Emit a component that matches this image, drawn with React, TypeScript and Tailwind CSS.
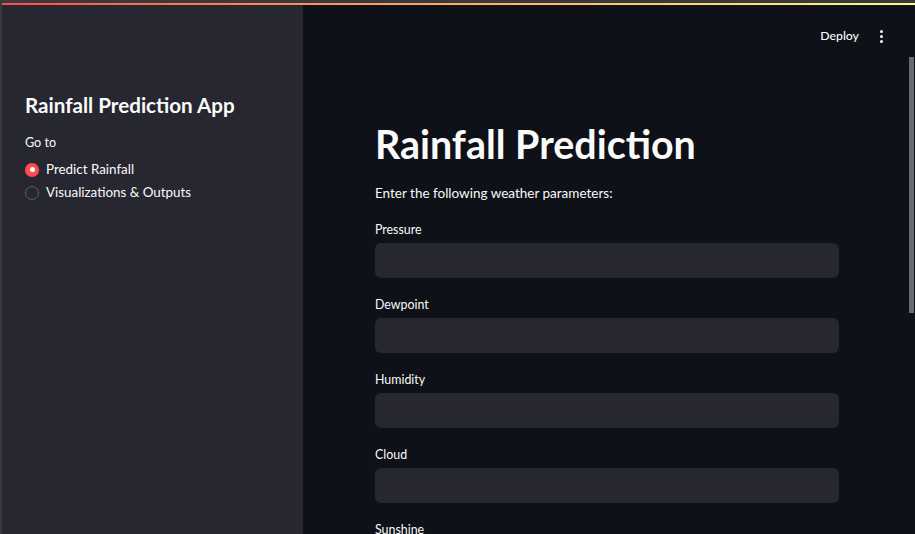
import React from "react";

const fields = ["Pressure", "Dewpoint", "Humidity", "Cloud", "Sunshine"];

function Radio({ label, checked }: { label: string; checked?: boolean }) {
  return (
    <div className="flex h-[23px] items-center gap-[7px]">
      {checked ? (
        <span className="grid h-[14px] w-[14px] place-items-center rounded-full bg-[#ff4b4b]">
          <span className="h-[5px] w-[5px] rounded-full bg-white" />
        </span>
      ) : (
        <span className="h-[14px] w-[14px] rounded-full border border-[#5c5e66]" />
      )}
      <span className="text-[13.4px] text-[#fafafa]">{label}</span>
    </div>
  );
}

export default function App() {
  return (
    <div
      className="flex h-[534px] w-full flex-col overflow-hidden bg-[#3a3a3c] pl-[2px] pt-[3px] text-[#fafafa]"
      style={{ fontFamily: "Lato, 'Noto Sans', sans-serif" }}
    >
      <div className="h-[2px] bg-gradient-to-r from-[#ff4b4b] to-[#fffd80]" />
      <div className="flex min-h-0 flex-1">
        {/* Sidebar */}
        <aside className="w-[301px] shrink-0 bg-[#262730] pl-[23px] pt-[84px]">
          <h2 className="text-[20.6px] font-bold leading-[32px]">Rainfall Prediction App</h2>
          <div className="mt-[14px] text-[12.6px] leading-[16px]">Go to</div>
          <div className="mt-[7px] flex flex-col">
            <Radio label="Predict Rainfall" checked />
            <Radio label="Visualizations & Outputs" />
          </div>
        </aside>

        {/* Main */}
        <main className="relative min-w-0 flex-1 bg-[#0e1117]">
          <header className="flex h-[62px] items-center justify-end gap-[21px] pr-[32px]">
            <button className="text-[12.3px] font-medium text-[#fafafa]">Deploy</button>
            <span className="flex flex-col items-center gap-[2px]">
              <span className="h-[3px] w-[3px] rounded-full bg-[#fafafa]" />
              <span className="h-[3px] w-[3px] rounded-full bg-[#fafafa]" />
              <span className="h-[3px] w-[3px] rounded-full bg-[#fafafa]" />
            </span>
          </header>
          <div className="absolute right-[1px] top-[52px] h-[256px] w-[5px] bg-[#6b6b6b]" />

          <div className="w-[536px] pl-[72px] pt-[53px]">
            <h1 className="text-[39.4px] font-bold leading-[48px]">Rainfall Prediction</h1>
            <p className="mt-[15px] text-[13.5px] leading-[20px]">Enter the following weather parameters:</p>
            <div className="mt-[18px] flex flex-col gap-[18px]">
              {fields.map((f) => (
                <div key={f} className="flex flex-col gap-[4px]">
                  <label className="text-[12.4px] leading-[18px]">{f}</label>
                  <input className="h-[35px] rounded-[6px] bg-[#262730] px-3 text-[14px] outline-none" />
                </div>
              ))}
            </div>
          </div>
        </main>
      </div>
    </div>
  );
}
